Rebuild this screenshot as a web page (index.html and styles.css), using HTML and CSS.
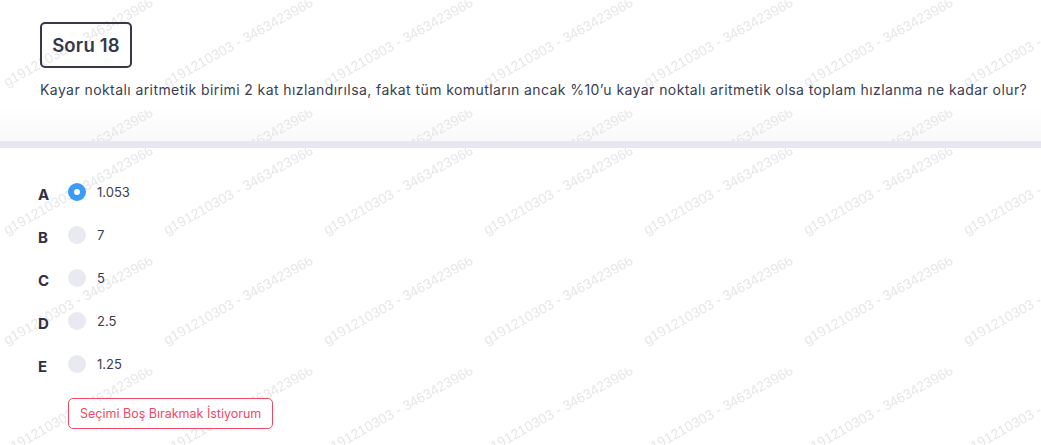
FILE: index.html
```html
<!DOCTYPE html>
<html lang="tr">
<head>
<meta charset="utf-8">
<title>Soru 18</title>
<link rel="stylesheet" href="styles.css">
</head>
<body>
<section class="question">
  <svg class="watermark" aria-hidden="true">
    <defs>
      <pattern id="wm1" x="-3" y="0" width="160" height="110" patternUnits="userSpaceOnUse">
        <text x="10" y="87" transform="rotate(-29 10 87)" class="wm-text">g191210303 - 3463423966</text>
      </pattern>
    </defs>
    <rect width="100%" height="100%" fill="url(#wm1)"/>
  </svg>
  <div class="q-content">
    <div class="q-badge">Soru 18</div>
    <p class="q-text">Kayar noktalı aritmetik birimi 2 kat hızlandırılsa, fakat tüm komutların ancak %10’u kayar noktalı aritmetik olsa toplam hızlanma ne kadar olur?</p>
  </div>
</section>
<div class="band"></div>
<section class="answers">
  <svg class="watermark" aria-hidden="true">
    <defs>
      <pattern id="wm2" x="-3" y="0" width="160" height="110" patternUnits="userSpaceOnUse">
        <text x="10" y="87" transform="rotate(-29 10 87)" class="wm-text">g191210303 - 3463423966</text>
      </pattern>
    </defs>
    <rect width="100%" height="100%" fill="url(#wm2)"/>
  </svg>
  <div class="a-content">
    <ul class="options">
      <li class="option"><span class="opt-letter">A</span><span class="radio radio-on"></span><span class="opt-text">1.053</span></li>
      <li class="option"><span class="opt-letter">B</span><span class="radio"></span><span class="opt-text">7</span></li>
      <li class="option"><span class="opt-letter">C</span><span class="radio"></span><span class="opt-text">5</span></li>
      <li class="option"><span class="opt-letter">D</span><span class="radio"></span><span class="opt-text">2.5</span></li>
      <li class="option"><span class="opt-letter">E</span><span class="radio"></span><span class="opt-text">1.25</span></li>
    </ul>
    <button class="skip-btn" type="button">Seçimi Boş Bırakmak İstiyorum</button>
  </div>
</section>
</body>
</html>
```

FILE: styles.css
```css
html, body {
  margin: 0;
  padding: 0;
  background: #ffffff;
}
body {
  font-family: "Inter", "Noto Sans", sans-serif;
  color: #393c52;
  width: 1041px;
  height: 445px;
  overflow: hidden;
}
.watermark {
  position: absolute;
  inset: 0;
  width: 100%;
  height: 100%;
  z-index: 0;
}
.wm-text {
  font-family: "Liberation Sans", Arial, sans-serif;
  font-size: 14px;
  fill: #e7e7e9;
}
.question {
  position: relative;
  height: 141px;
  background: linear-gradient(to bottom, #ffffff 0px, #ffffff 105px, #f9f9fb 141px);
}
.q-content {
  position: relative;
  z-index: 1;
  padding: 22px 0 0 40px;
  display: flex;
  flex-direction: column;
  align-items: flex-start;
}
.q-badge {
  box-sizing: border-box;
  height: 46px;
  width: 92px;
  border: 2px solid #363949;
  border-radius: 5px;
  display: flex;
  align-items: center;
  justify-content: center;
  font-size: 18.5px;
  font-weight: 600;
  color: #34374b;
  letter-spacing: 0.2px;
}
.q-text {
  margin: 12px 0 0 0;
  font-size: 14px;
  line-height: 20px;
  letter-spacing: 0.42px;
  color: #3a3d53;
  white-space: nowrap;
}
.band {
  height: 7px;
  background: #e7e7f1;
}
.answers {
  position: relative;
  height: 297px;
}
.a-content {
  position: relative;
  z-index: 1;
  padding: 22px 0 0 38px;
}
.options {
  list-style: none;
  margin: 0;
  padding: 0;
}
.option {
  height: 43px;
  display: flex;
  align-items: center;
}
.opt-letter {
  width: 30px;
  padding-top: 6px;
  font-size: 15px;
  font-weight: 700;
  color: #2e3046;
}
.radio {
  width: 18px;
  height: 18px;
  border-radius: 50%;
  background: #e9eaf1;
  flex-shrink: 0;
  display: flex;
  align-items: center;
  justify-content: center;
}
.radio-on {
  background: #3b9bf8;
}
.radio-on::after {
  content: "";
  width: 6px;
  height: 6px;
  border-radius: 50%;
  background: #ffffff;
}
.opt-text {
  margin-left: 11px;
  font-size: 13px;
  color: #3a3d53;
}
.skip-btn {
  margin: 13px 0 0 30px;
  height: 31px;
  padding: 0 11px;
  background: #ffffff;
  border: 1px solid #f04a66;
  border-radius: 5px;
  color: #ee4a66;
  font-family: "Inter", "Noto Sans", sans-serif;
  font-size: 12.5px;
  cursor: pointer;
}
```
